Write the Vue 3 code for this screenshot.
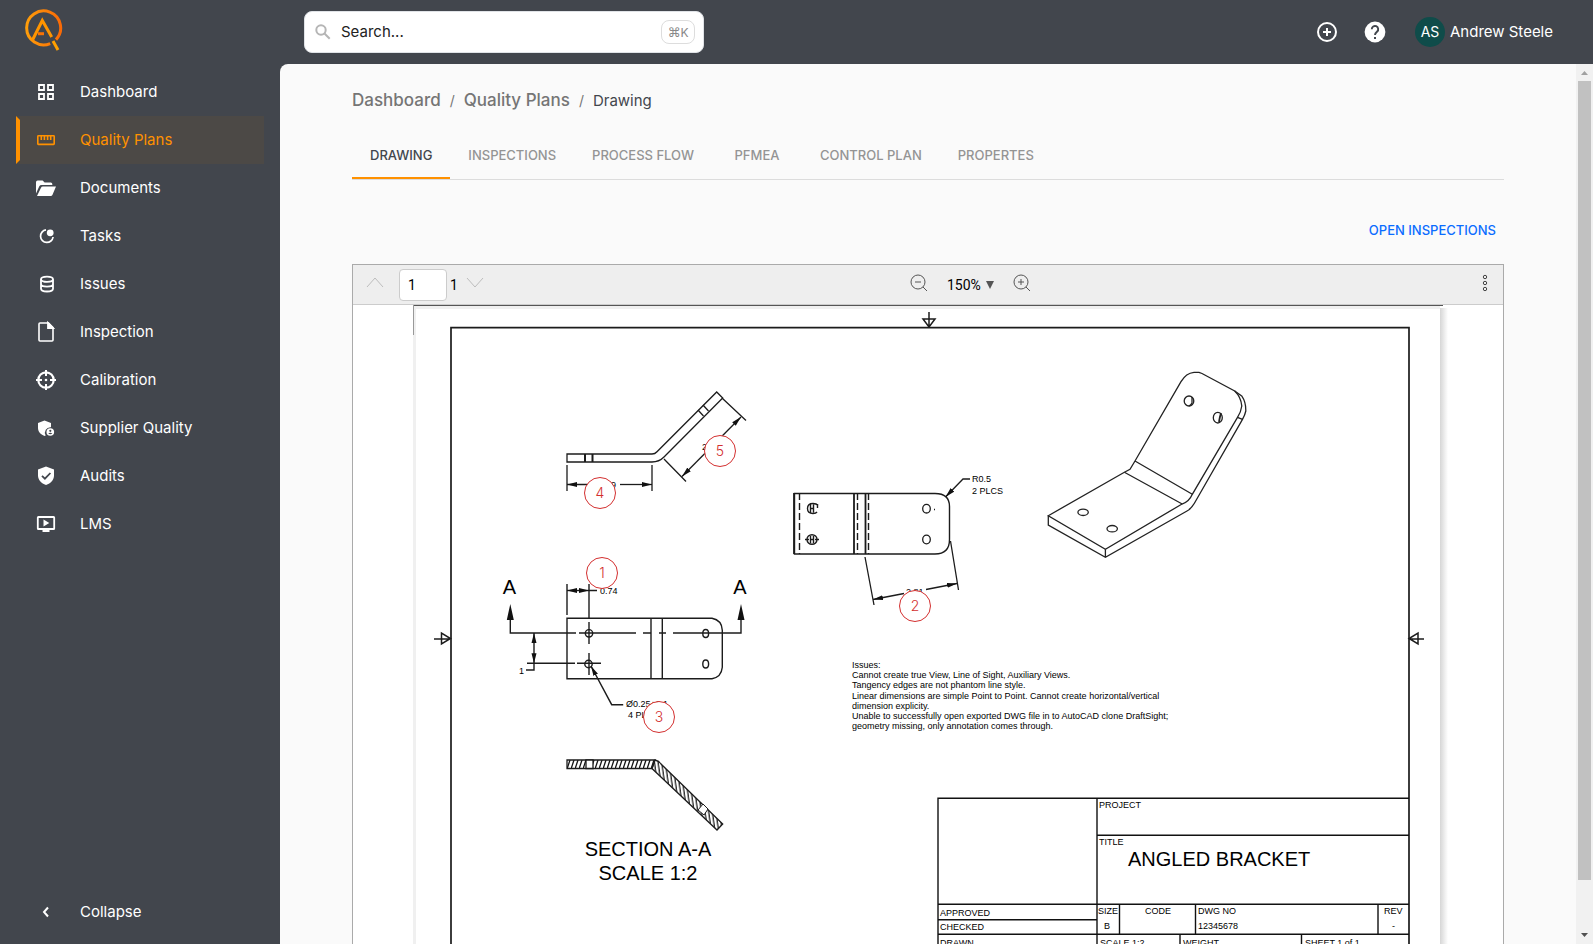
<script setup>
import { ref } from 'vue'

const navItems = [
  { label: 'Dashboard', icon: 'grid' },
  { label: 'Quality Plans', icon: 'ruler', active: true },
  { label: 'Documents', icon: 'folder' },
  { label: 'Tasks', icon: 'tasks' },
  { label: 'Issues', icon: 'database' },
  { label: 'Inspection', icon: 'file' },
  { label: 'Calibration', icon: 'target' },
  { label: 'Supplier Quality', icon: 'supplier' },
  { label: 'Audits', icon: 'audit' },
  { label: 'LMS', icon: 'video' },
]

const tabs = ['DRAWING', 'INSPECTIONS', 'PROCESS FLOW', 'PFMEA', 'CONTROL PLAN', 'PROPERTES']
const activeTab = ref('DRAWING')
const query = ref('')
const pageNumber = ref('1')
const zoomLevel = ref('150%')

// Sheet space, in drawing units
const sheet = { x: 413, y: 305, w: 1030, h: 800 }
const pins = [
  { n: 1, x: 602, y: 573 },
  { n: 2, x: 915, y: 606 },
  { n: 3, x: 659, y: 717 },
  { n: 4, x: 600, y: 493 },
  { n: 5, x: 720, y: 451 },
]
const pinStyle = (p) => ({
  left: ((p.x - sheet.x) / sheet.w) * 100 + '%',
  top: ((p.y - sheet.y) / sheet.h) * 100 + '%',
})

const notes = [
  'Issues:',
  'Cannot create true View, Line of Sight, Auxiliary Views.',
  'Tangency edges are not phantom line style.',
  'Linear dimensions are simple Point to Point. Cannot create horizontal/vertical',
  'dimension explicity.',
  'Unable to successfully open exported DWG file in to AutoCAD clone DraftSight;',
  'geometry missing, only annotation comes through.',
]
</script>

<template>
  <div class="app">
    <header class="topbar">
      <a class="logo" href="#" aria-label="Home">
        <svg width="40" height="42" viewBox="0 0 40 42" fill="none">
          <defs>
            <linearGradient id="ring" x1="0" y1="0" x2="1" y2="0">
              <stop offset="0" stop-color="#ff9d0a" />
              <stop offset="1" stop-color="#f96a06" />
            </linearGradient>
          </defs>
          <path d="M27.2 34.6A17 17 0 1 1 33 30.6" stroke="url(#ring)" stroke-width="3" />
          <path d="M9.5 31 19.3 11.5 28.7 28" stroke="#ff9500" stroke-width="3" />
          <path d="M15 24.7h6" stroke="#f97306" stroke-width="3" />
          <path d="m30 32 5 9" stroke="#ffa000" stroke-width="3" />
        </svg>
      </a>
      <label class="search">
        <svg width="16" height="16" viewBox="0 0 16 16" fill="none" stroke="#b5b5b5" stroke-width="2">
          <circle cx="6" cy="6" r="4.7" /><path d="m9.5 9.5 5.2 5.2" />
        </svg>
        <input v-model="query" type="text" placeholder="Search..." aria-label="Search" />
        <kbd><span>⌘</span>K</kbd>
      </label>
      <div class="actions">
        <button type="button" class="round" aria-label="Create">
          <svg width="24" height="24" viewBox="0 0 24 24" fill="none" stroke="#fff" stroke-width="2">
            <circle cx="12" cy="12" r="9" /><path d="M12 8v8M8 12h8" />
          </svg>
        </button>
        <button type="button" class="round" aria-label="Help">
          <svg width="24" height="24" viewBox="0 0 24 24">
            <circle cx="12" cy="12" r="10.4" fill="#fff" />
            <path d="M8.8 9.2a3.2 3.2 0 1 1 5.4 2.3c-1.3 1.2-2.2 1.7-2.2 3.6" fill="none" stroke="#42464d" stroke-width="1.9" />
            <path d="M11 17h2v2h-2z" fill="#42464d" />
          </svg>
        </button>
        <button type="button" class="user">
          <span class="avatar">AS</span>
          <span class="name">Andrew Steele</span>
        </button>
      </div>
    </header>

    <nav class="sidebar" aria-label="Main">
      <a v-for="item in navItems" :key="item.label" href="#" class="nav-item" :class="{ active: item.active }">
        <svg class="nav-icon" width="24" height="24" viewBox="0 0 24 24" fill="none" stroke="currentColor" stroke-width="1.8">
          <template v-if="item.icon === 'grid'">
            <path d="M5 5h5v5H5zM14 5h5v5h-5zM5 14h5v5H5zM14 14h5v5h-5z" />
          </template>
          <template v-else-if="item.icon === 'ruler'">
            <rect x="3.8" y="7.8" width="16.4" height="8.6" rx=".6" stroke-width="1.6" />
            <path d="M7.3 8v4M10.4 8v4M13.6 8v4M16.7 8v4" stroke-width="1.6" />
          </template>
          <template v-else-if="item.icon === 'folder'">
            <path d="M2 17.5V6.2Q2 4.6 3.6 4.6h5l2 2h6.2q1.5 0 1.5 1.5V9H7.5Q6 9 5.3 10.3zM3 20l4-8.3q.5-1.2 1.8-1.2H22L18.4 19q-.5 1-1.6 1z" fill="currentColor" stroke="none" />
          </template>
          <template v-else-if="item.icon === 'tasks'">
            <path d="M12 5.9A6.3 6.3 0 1 0 19.1 13" stroke-width="1.7" />
            <circle cx="16.2" cy="8.8" r="3.4" fill="currentColor" stroke="none" />
          </template>
          <template v-else-if="item.icon === 'database'">
            <ellipse cx="13" cy="7.3" rx="6" ry="2.6" />
            <path d="M7 7.3v9.5c0 1.5 2.7 2.7 6 2.7s6-1.2 6-2.7V7.3M7 12c0 1.5 2.7 2.6 6 2.6s6-1.1 6-2.6" />
          </template>
          <template v-else-if="item.icon === 'file'">
            <path d="M6 3h8.5L19 7.5V20q0 1-1 1H6q-1 0-1-1V4q0-1 1-1z" stroke-width="1.6" />
            <path d="M14 3v5h5z" fill="currentColor" />
          </template>
          <template v-else-if="item.icon === 'target'">
            <circle cx="12" cy="12" r="7.7" stroke-width="2.2" />
            <path d="M12 2v6M12 16v6M2 12h6M16 12h6" stroke-width="2" />
            <circle cx="12" cy="12" r="1.3" fill="currentColor" stroke="none" />
          </template>
          <template v-else-if="item.icon === 'supplier'">
            <path d="m10.5 4.5 6.5 2.6v4.2a5.5 5.5 0 0 0-5.3 8.3l-1.2.3C6.5 18.5 4 15.5 4 12V7.1z" fill="currentColor" stroke="none" />
            <circle cx="16.3" cy="16" r="3.8" fill="currentColor" stroke="none" />
            <circle cx="16.3" cy="14.8" r="1.1" fill="#42464d" stroke="none" />
            <path d="M14.2 17.6q2.1-1.8 4.2 0-2.1 1.5-4.2 0z" fill="#42464d" stroke="none" />
          </template>
          <template v-else-if="item.icon === 'audit'">
            <path d="m12 2.5 8 3v5.8c0 4.6-3.2 8.3-8 9.7-4.8-1.4-8-5.1-8-9.7V5.5z" fill="currentColor" stroke="none" />
            <path d="m8 11.8 2.9 2.9 5.5-5.7" stroke="#42464d" stroke-width="1.8" />
          </template>
          <template v-else>
            <rect x="3.8" y="5" width="16.4" height="12" rx=".6" />
            <path d="m9.5 7.5 5.8 3.5-5.8 3.5z" fill="currentColor" stroke="none" />
            <path d="M8.5 19h7" stroke-width="2" />
          </template>
        </svg>
        <span>{{ item.label }}</span>
      </a>
      <button type="button" class="nav-item collapse">
        <svg class="nav-icon" width="24" height="24" viewBox="0 0 24 24" fill="none" stroke="currentColor" stroke-width="2">
          <path d="m14 7.5-4 4.5 4 4.5" />
        </svg>
        <span>Collapse</span>
      </button>
    </nav>

    <div class="content">
      <main class="main">
        <nav class="crumbs" aria-label="Breadcrumb">
          <a href="#">Dashboard</a>
          <span class="slash">/</span>
          <a href="#">Quality Plans</a>
          <span class="slash">/</span>
          <span class="current">Drawing</span>
        </nav>

        <div class="tabs" role="tablist">
          <button
            v-for="tab in tabs"
            :key="tab"
            type="button"
            role="tab"
            class="tab"
            :class="{ selected: tab === activeTab }"
            :aria-selected="tab === activeTab"
            @click="activeTab = tab"
          >{{ tab }}</button>
        </div>

        <button type="button" class="open-link">OPEN INSPECTIONS</button>

        <section class="viewer">
          <div class="toolbar">
            <div class="pager">
              <button type="button" aria-label="Previous page">
                <svg width="18" height="18" viewBox="0 0 18 18" fill="none" stroke="#bdbdbd"><path d="m1 13 8-9 8 9" /></svg>
              </button>
              <input v-model="pageNumber" type="text" aria-label="Page number" />
              <span class="total">1</span>
              <button type="button" aria-label="Next page">
                <svg width="18" height="18" viewBox="0 0 18 18" fill="none" stroke="#bdbdbd"><path d="m1 4 8 9 8-9" /></svg>
              </button>
            </div>
            <div class="zoom">
              <button type="button" aria-label="Zoom out">
                <svg width="18" height="18" viewBox="0 0 18 18" fill="none" stroke="#555"><circle cx="8" cy="8" r="7" /><path d="M5 8h6M13 13l4 4" /></svg>
              </button>
              <label class="level">
                <select v-model="zoomLevel" aria-label="Zoom level">
                  <option>100%</option>
                  <option>150%</option>
                  <option>200%</option>
                </select>
                <svg width="8" height="8" viewBox="0 0 8 8"><path d="M0 0h8L4 8z" fill="#555" /></svg>
              </label>
              <button type="button" aria-label="Zoom in">
                <svg width="18" height="18" viewBox="0 0 18 18" fill="none" stroke="#555"><circle cx="8" cy="8" r="7" /><path d="M5 8h6M8 5v6M13 13l4 4" /></svg>
              </button>
            </div>
            <button type="button" class="more" aria-label="More">
              <svg width="6" height="18" viewBox="0 0 6 18" fill="none" stroke="#444"><circle cx="3" cy="3" r="1.7" /><circle cx="3" cy="9" r="1.7" /><circle cx="3" cy="15" r="1.7" /></svg>
            </button>
          </div>

          <div class="canvas">
            <div class="sheet">
              <svg class="drawing" viewBox="413 305 1030 800" role="img" aria-label="Angled bracket drawing">
                <defs>
                  <linearGradient id="edge" x1="0" x2="1" y1="0" y2="0">
                    <stop offset="0" stop-color="#d6d6d6" />
                    <stop offset="1" stop-color="#fff" />
                  </linearGradient>
                  <pattern id="hatchA" width="4" height="9" patternUnits="userSpaceOnUse" x="567" y="760">
                    <path d="M0 9 3 0" stroke="#111" stroke-width="1.3" />
                  </pattern>
                  <pattern id="hatchB" width="3.6" height="40" patternUnits="userSpaceOnUse" patternTransform="rotate(-8)">
                    <path d="M2 0v40" stroke="#111" stroke-width="1.2" />
                  </pattern>
                  <marker id="head" markerUnits="userSpaceOnUse" markerWidth="11" markerHeight="6" refX="10" refY="3" orient="auto-start-reverse">
                    <path d="M0 .5 10 3 0 5.5z" fill="#111" />
                  </marker>
                </defs>

                <!-- sheet edges -->
                <path d="M413 306h3v799h-3zM413 306h1027v3H413z" fill="#f0f0f0" />
                <path d="M1440 308h8v797h-8z" fill="url(#edge)" />
                <path d="M413 305h1030v1H413z" fill="#555" />
                <path d="M413 305h1v30h-1z" fill="#999" />

                <g fill="none" stroke="#1c1c1c" stroke-width="1.5">
                  <path d="M451 1110V327.7H1409V1110" stroke-width="1.7" />
                  <path d="M929 312v14M923 319h12l-6 8zM434 639h16M441.5 633v11l9-5.5zM1424 639h-15M1418 633v11l-9-5.5z" />
                </g>

                <!-- side view -->
                <g fill="none" stroke="#1c1c1c" stroke-width="1.3">
                  <path d="M567 454h85q3 0 5-2.3L716.7 392l6 6L664 457q-5 5-12 5H567z" />
                  <path d="M585 454v8M592.5 454v8" stroke-width="2" />
                  <path d="m698 410 5.5 6M703 405l5.5 6" />
                  <path d="M567 465v26M652 465v26M722 398l24 22.5M664 459l22 22.5" />
                  <path d="M567 484.5h45" marker-start="url(#head)" />
                  <path d="M620 484.5h32" marker-end="url(#head)" />
                  <path d="m682 476.5 59-59.5" marker-start="url(#head)" marker-end="url(#head)" />
                </g>

                <!-- auxiliary view -->
                <g fill="none" stroke="#1c1c1c" stroke-width="1.3">
                  <path d="M794.5 493.5H935q14.5 0 14.5 13v33q0 14.5-14.5 14.5H794.5z" stroke-width="1.4" />
                  <path d="M794 493v61M854 493v61M865.5 493v61" stroke-width="1.8" />
                  <path d="M799.5 493v61M857.5 493v61M868.5 493v61" stroke-width="1.4" stroke-dasharray="7 3" />
                  <ellipse cx="926.5" cy="508.7" rx="3.8" ry="4.3" /><ellipse cx="926.5" cy="539.5" rx="3.8" ry="4.3" />
                  <path d="M934 509.5h1" />
                  <g stroke-width="1.4">
                    <path d="M818 505.5q-1.500-2-5-2-5.500 0-5.500 5t5.500 5q3 0 4-1.500M810.500 504.500v8M813.500 504.500v8M810 508.500h4M817.500 504v4" />
                    <ellipse cx="812" cy="539.5" rx="5" ry="4.800" /><path d="M805 539.5h4M815 539.5h4M810.500 536v7.500M813.500 536v7.500M810.500 539.5h3" />
                  </g>
                  <path d="m945.5 497 17.5-18h7" marker-start="url(#head)" />
                  <path d="m865 557 9 48M950.5 541l8 49" />
                  <path d="m873 599.5 31-6" marker-start="url(#head)" />
                  <path d="m926 589.5 31-6" marker-end="url(#head)" />
                </g>

                <!-- isometric view -->
                <g fill="none" stroke="#222" stroke-width="1.3">
                  <path d="M1048.3 515.7 1124.4 472.3 1130 469.3 1135 461 1181 381.7Q1186 373 1194 372.3H1199L1202 373.5 1234.7 391Q1241 397 1241.8 406 1241 412 1237.500 417.300L1192.300 494.300Q1189 502 1182 504L1105.4 549.3z" />
                  <path d="M1234.7 391 1242 396.3Q1246 402 1245.8 411 1245 415 1242.5 419.3L1194.4 503.3Q1191 509 1187 511L1105.4 557.3 1048.3 525V515.7M1105.4 549.3v8M1135 461l57.3 33.3M1124.4 472.3 1182.2 504M1237.5 417.3l5 2" />
                  <ellipse cx="1189" cy="401" rx="4.800" ry="5" /><path d="M1192 397v6q-1 2-3 3" />
                  <ellipse cx="1217.8" cy="417.7" rx="4.500" ry="5.300" /><path d="M1221 413q-1 3-2 9" stroke-width="1.8" />
                  <ellipse cx="1083.1" cy="512.3" rx="5.200" ry="3.200" /><ellipse cx="1112.2" cy="528.7" rx="5.200" ry="3.200" />
                </g>

                <!-- front view -->
                <g fill="none" stroke="#1c1c1c" stroke-width="1.4">
                  <path d="M567 618.3H712q10 2 10.3 12v37q-1 10-10.3 11.4H567zM651 618v61M662.3 618v61" />
                  <path d="M510.3 618v15H576M579 633h57M643 633h8M659 633h7M673 633h68V618M527 663.3h48M577 663.3h24" />
                  <path d="M589 584v35M589 622v22M589 653v22M567 584v31" />
                  <circle cx="589" cy="633.3" r="3.7" /><circle cx="588.5" cy="664" r="3.7" />
                  <ellipse cx="705.7" cy="633.5" rx="2.9" ry="4" /><ellipse cx="705.7" cy="664" rx="2.9" ry="4" />
                  <path d="M510.3 604l3.5 16h-7zM741 604l3.5 16h-7z" fill="#111" stroke="none" />
                  <path d="M534 633v30.3" marker-start="url(#head)" marker-end="url(#head)" />
                  <path d="M534 663v7h-8M589 590.5h8" />
                  <path d="M567 590.5h22" marker-start="url(#head)" marker-end="url(#head)" />
                  <path d="m591 666 20.7 38.7h11.5" marker-start="url(#head)" />
                </g>

                <!-- section A-A -->
                <g stroke="#1c1c1c" stroke-width="1.3">
                  <path d="M567 760h88l-3 8.5h-85z" fill="url(#hatchA)" />
                  <path d="M655 760q4 1 6 4l61.7 60-5.700 6-65-61.500z" fill="url(#hatchB)" />
                  <path d="M586 760h7v8.5h-7z" fill="#fff" />
                  <path d="m703 804 5 5-4 6-6-5z" fill="#fff" stroke-width="1" />
                </g>

                <!-- title block -->
                <path
                  d="M938 1105V798.3h471M1097 798v307M1097 835.3h312M938 904.3h471M938 919.7h159M938 934.3h471M1119.5 904v30M1195.5 904v30M1378 904v30M1180 934v30M1301.5 934v30"
                  fill="none"
                  stroke="#111"
                  stroke-width="1.4"
                />

                <g class="small">
                  <text x="611" y="488">9</text>
                  <text x="702" y="450">2</text>
                  <text x="972" y="482">R0.5</text>
                  <text x="972" y="494">2 PLCS</text>
                  <text x="906" y="595">2.81</text>
                  <text x="600" y="594">0.74</text>
                  <text x="519" y="674">1</text>
                  <text x="626" y="707">Ø0.25±0.1</text>
                  <text x="628" y="718">4 PLCS</text>
                  <text v-for="(line, i) in notes" :key="line" x="852" :y="668 + i * 10.2">{{ line }}</text>
                  <text x="1099" y="808">PROJECT</text>
                  <text x="1099" y="845">TITLE</text>
                  <text x="940" y="916">APPROVED</text>
                  <text x="940" y="930">CHECKED</text>
                  <text x="940" y="946">DRAWN</text>
                  <text x="1098" y="914">SIZE</text>
                  <text x="1104" y="929">B</text>
                  <text x="1145" y="914">CODE</text>
                  <text x="1198" y="914">DWG NO</text>
                  <text x="1198" y="929">12345678</text>
                  <text x="1384" y="914">REV</text>
                  <text x="1392" y="929">-</text>
                  <text x="1100" y="946">SCALE 1:2</text>
                  <text x="1183" y="946">WEIGHT</text>
                  <text x="1305" y="946">SHEET 1 of 1</text>
                </g>
                <g class="large">
                  <text x="509.5" y="594" text-anchor="middle">A</text>
                  <text x="740" y="594" text-anchor="middle">A</text>
                  <text x="648" y="856" text-anchor="middle">SECTION A-A</text>
                  <text x="648" y="880" text-anchor="middle">SCALE 1:2</text>
                  <text x="1128" y="866">ANGLED BRACKET</text>
                </g>
              </svg>
              <button v-for="p in pins" :key="p.n" type="button" class="pin" :style="pinStyle(p)">{{ p.n }}</button>
            </div>
          </div>
        </section>
      </main>
      <div class="scrollbar" aria-hidden="true">
        <svg width="17" height="17" viewBox="0 0 17 17"><path d="M5 11h7L8.5 7z" fill="#a0a0a0" /></svg>
        <div class="track"><div class="thumb"></div></div>
        <svg width="17" height="17" viewBox="0 0 17 17"><path d="M5 6h7l-3.5 4z" fill="#505050" /></svg>
      </div>
    </div>
  </div>
</template>

<style>
body {
  margin: 0;
  background: #42464d;
}
</style>

<style scoped>
.app {
  display: grid;
  grid-template: 64px minmax(0, 1fr) / 280px minmax(0, 1fr);
  height: 100vh;
  overflow: hidden;
  background: #42464d;
  color: #fff;
  font-family: Inter, "Open Sans", sans-serif;
  font-size: 15px;
}
button,
input,
select {
  font: inherit;
  color: inherit;
}
button {
  padding: 0;
  border: 0;
  background: none;
  cursor: pointer;
}
a {
  color: inherit;
  text-decoration: none;
}
svg {
  display: block;
  flex: none;
}

.topbar {
  grid-column: 1 / -1;
  display: grid;
  grid-template-columns: 304px 400px 1fr;
  align-items: center;
}
.logo {
  justify-self: start;
  padding: 0 0 4px 23px;
}
.search {
  display: flex;
  align-items: center;
  box-sizing: border-box;
  height: 42px;
  padding: 0 8px 0 10px;
  border: 1px solid #e0e3e7;
  border-radius: 8px;
  background: #fff;
  color: #222;
}
.search input {
  flex: 1;
  min-width: 0;
  margin-left: 10px;
  padding: 0 0 2px;
  border: 0;
  outline: 0;
  background: none;
}
.search input::placeholder {
  color: #222;
  opacity: 1;
}
kbd {
  display: flex;
  align-items: center;
  justify-content: center;
  box-sizing: border-box;
  width: 34px;
  height: 24px;
  border: 1px solid #ddd;
  border-radius: 8px;
  color: #888;
  font-family: Inter, "DejaVu Sans", sans-serif;
  font-size: 12px;
}
kbd span {
  font-family: "DejaVu Sans", sans-serif;
  font-size: 13px;
}
.actions {
  display: flex;
  align-items: center;
  justify-content: flex-end;
  gap: 24px;
  padding-right: 40px;
}
.user {
  display: flex;
  align-items: center;
  gap: 5px;
  margin-left: 4px;
}
.name {
  padding-bottom: 2px;
}
.avatar {
  width: 30px;
  border-radius: 50%;
  background: #0f4c4a;
  font-size: 14px;
  line-height: 30px;
  text-align: center;
}

.sidebar {
  display: flex;
  flex-direction: column;
  padding: 4px 16px 8px;
}
.nav-item {
  display: flex;
  align-items: center;
  gap: 22px;
  height: 48px;
  box-sizing: border-box;
  padding-left: 14px;
  border: 4px solid transparent;
  border-width: 4px 0 4px 4px;
  text-align: left;
}
.nav-item span {
  padding-bottom: 2px;
}
.nav-item.active {
  border-left-color: #ff9100;
  background: #4c4946;
  color: #ff9100;
}
.collapse {
  margin-top: auto;
}

.content {
  display: flex;
  min-width: 0;
  min-height: 0;
  overflow: hidden;
  border-top-left-radius: 8px;
  background: #fafafa;
}
.main {
  display: flex;
  flex: 1;
  flex-direction: column;
  min-width: 0;
  padding: 24px 72px 0;
  overflow: hidden;
}
.crumbs {
  display: flex;
  flex: none;
  align-items: center;
  gap: 9px;
  height: 24px;
  color: #757575;
  font-size: 17px;
  font-weight: 500;
}
.slash {
  font-size: 14px;
  font-weight: 400;
}
.current {
  color: #42464d;
  font-size: 15px;
  font-weight: 400;
}
.tabs {
  display: flex;
  flex: none;
  margin-top: 20px;
  border-bottom: 1px solid #dcdcdc;
}
.tab {
  height: 47px;
  min-width: 90px;
  padding: 0 18px;
  border-bottom: 2px solid transparent;
  color: #949494;
  font-size: 13px;
  font-weight: 500;
}
.tab.selected {
  border-bottom-color: #ff9100;
  color: #42464d;
}
.open-link {
  flex: none;
  align-self: flex-end;
  height: 36px;
  margin: 32px 0 16px;
  padding: 0 8px;
  color: #0a6cff;
  font-size: 13px;
  font-weight: 500;
}

.viewer {
  flex: none;
  border: 1px solid #aaa;
  background: #fff;
}
.toolbar {
  display: flex;
  align-items: center;
  box-sizing: border-box;
  height: 40px;
  padding-left: 13px;
  border-bottom: 1px solid #ccc;
  background: #eee;
  color: #000;
  font-family: Roboto, sans-serif;
  font-size: 14px;
}
.toolbar button {
  padding-bottom: 3px;
}
.pager {
  display: flex;
  align-items: center;
}
.pager input {
  box-sizing: border-box;
  width: 48px;
  height: 32px;
  margin-left: 15px;
  padding: 0 8px;
  border: 1px solid #ccc;
  border-radius: 4px;
  background: #fff;
}
.total {
  margin: 0 8px 0 3px;
}
.zoom {
  display: flex;
  flex: 1;
  align-items: center;
  justify-content: center;
  gap: 19px;
  padding-right: 10px;
}
.level {
  display: flex;
  align-items: center;
  gap: 3px;
}
.level select {
  width: 36px;
  padding: 0;
  border: 0;
  outline: 0;
  background: none;
  appearance: none;
}
.more {
  display: flex;
  justify-content: center;
  width: 36px;
}
.canvas {
  padding: 0 60px;
}
.sheet {
  position: relative;
}
.drawing {
  display: block;
  width: 100%;
  height: auto;
  overflow: visible;
}
.drawing text {
  fill: #000;
  font-family: "Liberation Sans", Arial, sans-serif;
}
.small text {
  font-size: 9px;
}
.large text {
  font-size: 20px;
}
.pin {
  position: absolute;
  box-sizing: border-box;
  width: 32px;
  height: 32px;
  margin: -16px 0 0 -16px;
  padding-bottom: 2px;
  border: 1px solid #d32f2f;
  border-radius: 50%;
  background: #fff;
  color: #d32f2f;
  font-size: 14px;
  font-weight: 300;
}

.scrollbar {
  display: flex;
  flex: none;
  flex-direction: column;
  width: 17px;
  background: #f1f1f1;
}
.track {
  flex: 1;
  padding: 0 2px;
}
.thumb {
  height: 94.5%;
  background: #c1c1c1;
}
</style>
